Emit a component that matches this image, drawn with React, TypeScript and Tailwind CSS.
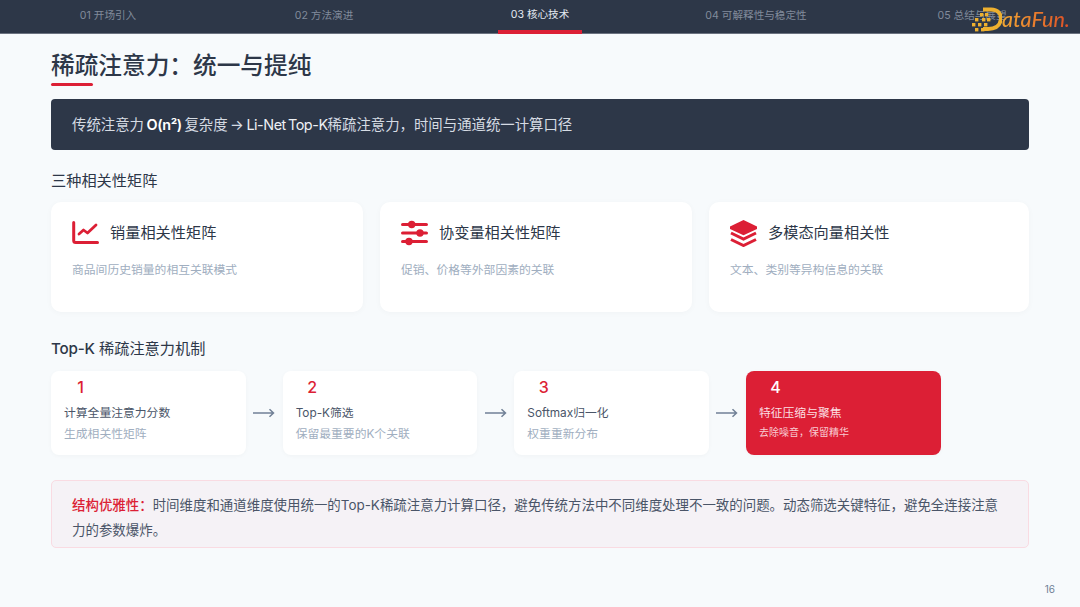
const FONT = "font-['Inter','Noto_Sans_CJK_SC',sans-serif]";

const tabs = [
  { label: "01 开场引入" },
  { label: "02 方法演进" },
  { label: "03 核心技术", active: true },
  { label: "04 可解释性与稳定性" },
  { label: "05 总结与展望" },
];

const steps = [
  { n: "1", title: "计算全量注意力分数", desc: "生成相关性矩阵" },
  { n: "2", title: "Top-K筛选", desc: "保留最重要的K个关联" },
  { n: "3", title: "Softmax归一化", desc: "权重重新分布" },
  { n: "4", title: "特征压缩与聚焦", desc: "去除噪音，保留精华", hot: true },
];

function ChartIcon() {
  return (
    <svg width="27" height="24" viewBox="0 0 27 24" fill="none" stroke="#dc1f35" strokeWidth="3" strokeLinecap="round" strokeLinejoin="round">
      <path d="M1.7 1.5 V19.5 Q1.7 21.5 3.7 21.5 H25.5" />
      <path d="M7 13 L11.5 9 L15.5 12 L24 4" strokeWidth="2.8" />
    </svg>
  );
}

function SlidersIcon() {
  return (
    <svg width="27" height="26" viewBox="0 0 27 26" fill="#dc1f35">
      <rect x="0" y="2.9" width="27" height="3.2" rx="1.6" />
      <circle cx="10.7" cy="4.5" r="3.7" />
      <rect x="0" y="11.4" width="27" height="3.2" rx="1.6" />
      <circle cx="19" cy="13" r="3.7" />
      <rect x="0" y="19.9" width="27" height="3.2" rx="1.6" />
      <circle cx="8" cy="21.5" r="3.7" />
    </svg>
  );
}

function LayersIcon() {
  return (
    <svg width="27" height="27" viewBox="0 0 27 27" fill="#dc1f35">
      <polygon points="13.5,0 27,6.5 27,9 13.5,15.2 0,9 0,6.5" />
      <path d="M1 13 L13.5 19 L26 13" fill="none" stroke="#dc1f35" strokeWidth="3" />
      <path d="M1 19.5 L13.5 25.5 L26 19.5" fill="none" stroke="#dc1f35" strokeWidth="3" />
    </svg>
  );
}

function DataFunLogo() {
  const dots = [
    [8, 0], [13, 0], [3, 5], [10, 5], [15, 5], [0, 10], [6, 10], [12, 10], [3, 15], [9, 15],
  ];
  return (
    <div className="absolute left-[972px] top-[6px] flex h-[26px] items-end">
      <svg width="30" height="26" viewBox="0 0 30 26" className="shrink-0">
        <path d="M11 3.5 H19 C26 3.5 29.5 8 28.8 13.5 C28 20 23 23 16 23 H11" fill="none" stroke="#eeb02f" strokeWidth="3.8" />
        {dots.map(([x, y]) => (
          <rect key={`${x}-${y}`} x={x} y={y + 7} width="3.4" height="3.4" fill="#eeb02f" />
        ))}
      </svg>
      <span className="bg-gradient-to-r from-[#f0a534] to-[#dc4a26] bg-clip-text pr-[2px] font-['Lato',sans-serif] text-[21.5px] leading-[26px] font-medium italic text-transparent">
        ataFun.
      </span>
    </div>
  );
}

export default function App() {
  return (
    <div className={`relative flex h-[607px] w-[1080px] flex-col overflow-hidden bg-[#f7fafc] ${FONT} text-[#2d3748]`}>
      {/* top nav */}
      <div className="flex h-[34px] border-b border-[#6b7280] bg-[#2d3748]">
        {tabs.map((t) => (
          <div key={t.label} className="flex flex-1 justify-center">
            {t.active ? (
              <div className="flex h-[34px] w-[84px] items-start justify-center border-b-[4px] border-[#dc1f35] pt-[7px] text-[10.6px] leading-4 text-[#e2e8f0]">
                {t.label}
              </div>
            ) : (
              <div className="pt-[8px] text-[10.6px] leading-4 text-[#818b9b]">{t.label}</div>
            )}
          </div>
        ))}
      </div>
      <DataFunLogo />

      <div className="flex flex-1 flex-col px-[51px]">
        <h1 className="mt-[14px] text-[23.68px] leading-[36px] font-medium text-[#2d3748]">稀疏注意力：统一与提纯</h1>
        <div className="mt-[-1px] h-[3px] w-[42px] rounded-sm bg-[#dc1f35]" />

        <div className="mt-[13px] flex h-[51px] items-center rounded-[4px] bg-[#2d3748] px-[21px] text-[14.4px] text-[#d5dbe3] [word-spacing:-1.5px]">
          <span>
            传统注意力 <b className="font-semibold tracking-[-0.4px] text-white">O(n²)</b> 复杂度 → <span className="tracking-[-0.45px] text-[#edf0f4]">Li-Net Top-K</span>稀疏注意力，时间与通道统一计算口径
          </span>
        </div>

        <h2 className="mt-[20px] text-[15.2px] leading-[22px] font-normal">三种相关性矩阵</h2>

        <div className="mt-[10px] grid grid-cols-[312px_312px_320px] gap-[17px]">
          <MatrixCard icon={<ChartIcon />} title="销量相关性矩阵" desc="商品间历史销量的相互关联模式" />
          <MatrixCard icon={<SlidersIcon />} title="协变量相关性矩阵" desc="促销、价格等外部因素的关联" />
          <MatrixCard icon={<LayersIcon />} title="多模态向量相关性" desc="文本、类别等异构信息的关联" />
        </div>

        <h2 className="mt-[26px] text-[15.2px] leading-[22px] font-normal">
          <span className="font-medium tracking-[-0.2px]">Top-K</span> 稀疏注意力机制
        </h2>

        <div className="mt-[11px] flex">
          {steps.map((s, i) => (
            <div key={s.n} className="flex">
              {i > 0 && (
                <div className="flex w-[37px] items-center justify-center">
                  <svg width="22" height="10" viewBox="0 0 22 10" fill="none" stroke="#718096" strokeWidth="1.5">
                    <path d="M0 5 H20.5 M16.5 1.2 L20.5 5 L16.5 8.8" />
                  </svg>
                </div>
              )}
              <div className={`h-[84px] w-[194.67px] rounded-lg px-[13px] pt-[6px] shadow-[0_1px_4px_rgba(0,0,0,0.03)] ${s.hot ? "bg-[#dc1f35]" : "bg-white"}`}>
                <div className={`w-[33px] text-center text-[16px] leading-[20px] font-medium ${s.hot ? "text-white" : "text-[#dc1f35]"}`}>{s.n}</div>
                <div className={`mt-[6px] text-[11.8px] leading-[20px] ${s.hot ? "text-[#fbdfe3]" : "text-[#4a5568]"}`}>{s.title}</div>
                {s.hot ? (
                  <div className="mt-[-1px] text-[10px] leading-[20px] text-[#f8ccd2]">{s.desc}</div>
                ) : (
                  <div className="mt-[1px] text-[11.8px] leading-[20px] text-[#a0aec0]">{s.desc}</div>
                )}
              </div>
            </div>
          ))}
        </div>

        <div className="mt-[25px] h-[68px] rounded-[5px] border border-[#f9dbe2] bg-[#f5f2f6] px-[20px] pt-[12px] text-[13.44px] leading-[25px] text-[#4a5568]">
          <span className="font-medium text-[#dc1f35]">结构优雅性：</span>
          时间维度和通道维度使用统一的Top-K稀疏注意力计算口径，避免传统方法中不同维度处理不一致的问题。动态筛选关键特征，避免全连接注意力的参数爆炸。
        </div>
      </div>

      <div className="absolute top-[583px] right-[25px] text-[10px] leading-[13px] text-[#718096]">16</div>
    </div>
  );
}

function MatrixCard({ icon, title, desc }: { icon: React.ReactNode; title: string; desc: string }) {
  return (
    <div className="h-[110px] rounded-[10px] bg-white px-[21px] pt-[17px] shadow-[0_1px_6px_rgba(0,0,0,0.03)]">
      <div className="flex h-[28px] items-center gap-[11px]">
        <div className="flex w-[27px] justify-start">{icon}</div>
        <div className="text-[15.2px] font-normal text-[#2d3748]">{title}</div>
      </div>
      <div className="mt-[14px] text-[11.8px] leading-[18px] text-[#a0aec0]">{desc}</div>
    </div>
  );
}
